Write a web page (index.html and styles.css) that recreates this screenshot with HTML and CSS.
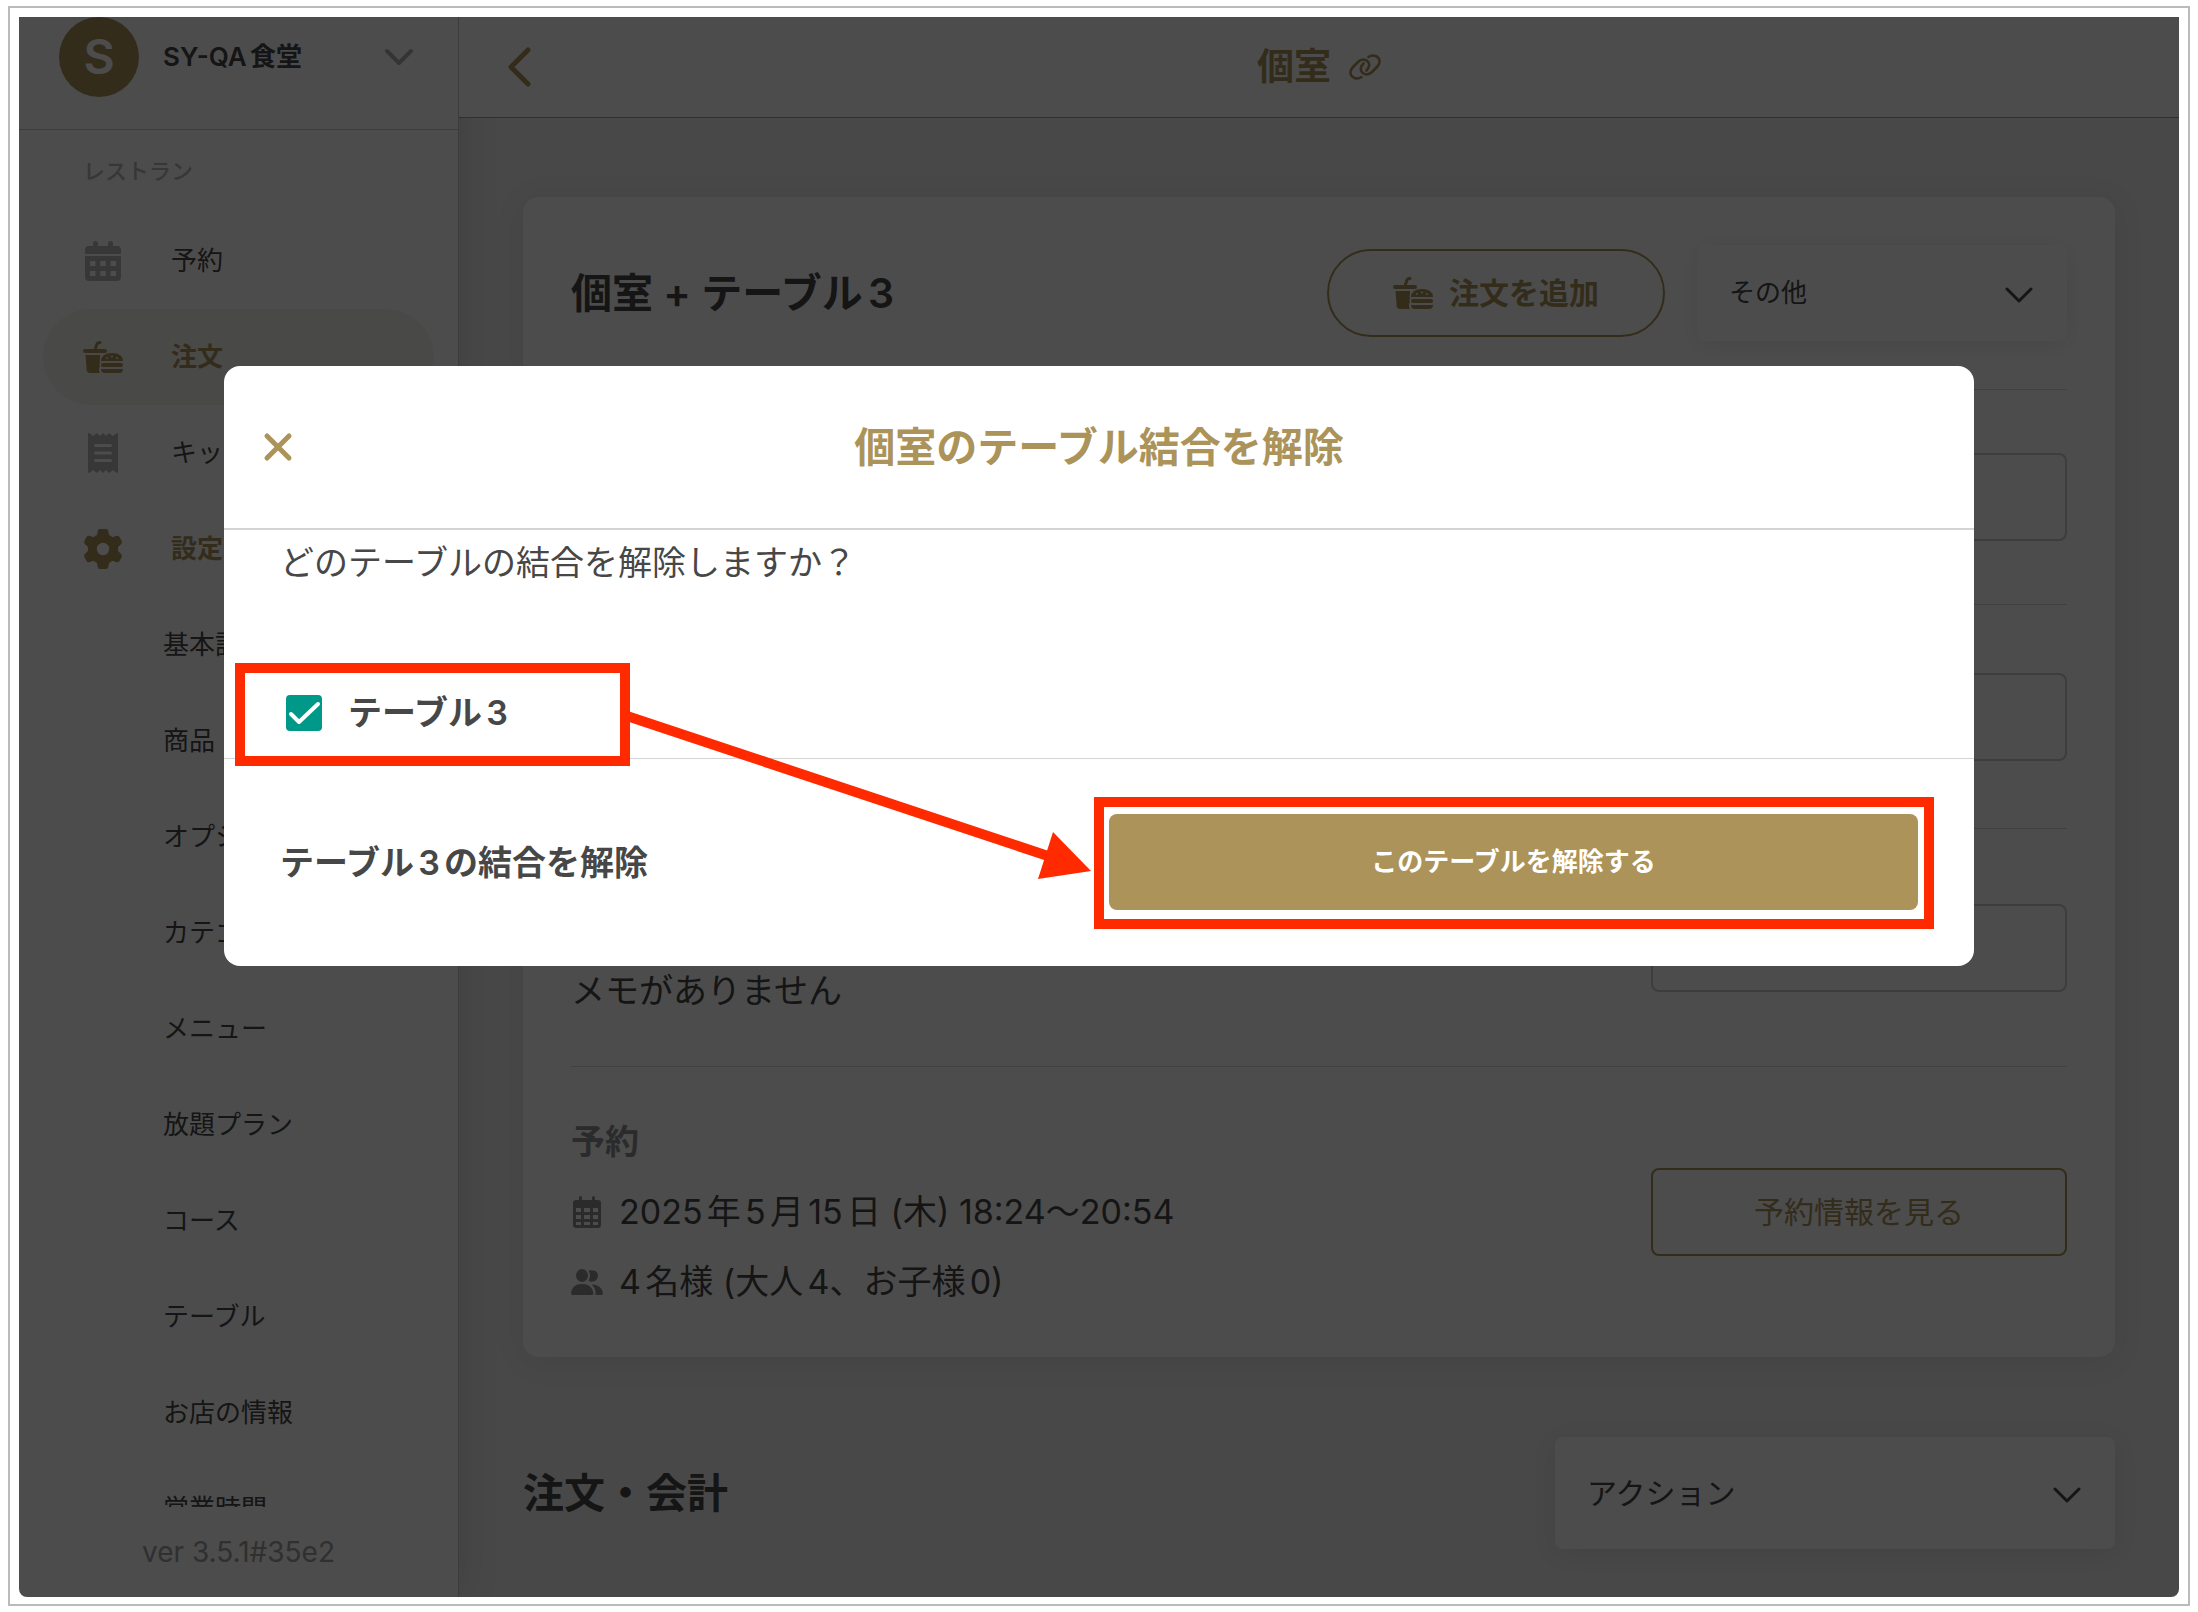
FILE: index.html
```html
<!DOCTYPE html>
<html lang="ja">
<head>
    <meta charset="UTF-8">
    <meta name="viewport" content="width=device-width, initial-scale=1.0">
    <title>個室</title>
    <link rel="stylesheet" href="styles.css">
</head>
<body>
    <!-- アイコン -->
    <svg class="sprite" aria-hidden="true">
        <symbol id="icon-food" viewBox="0 0 40 32">
            <path d="M12 9 14 3Q14.600 1.400 17 1.400" fill="none" stroke="currentColor" stroke-width="3" stroke-linecap="round"/>
            <rect x="0" y="8" width="24" height="4" rx="2"/>
            <path d="M2.500 14H17V17Q16 19 17 21.500 15.500 23 17 25 15.500 27 16 28.500 16 31 17 32H7Q4 32 3.700 29Z"/>
            <path fill-rule="evenodd" d="M18 20Q18.500 12 29 12 39.500 12 40 20ZM23 17a1 1 0 1 0 2 0 1 1 0 1 0-2 0ZM28 15.500a1 1 0 1 0 2 0 1 1 0 1 0-2 0ZM33 17a1 1 0 1 0 2 0 1 1 0 1 0-2 0Z"/>
            <rect x="18" y="22" width="22" height="4" rx="2"/>
            <path d="M18 28H40Q40 32 36 32H22Q18 32 18 28Z"/>
        </symbol>
        <symbol id="icon-calendar" viewBox="0 0 36 40">
            <rect x="8" y="0" width="5" height="9" rx="2.500"/>
            <rect x="23" y="0" width="5" height="9" rx="2.500"/>
            <path d="M4 5H32Q36 5 36 9V13H0V9Q0 5 4 5Z"/>
            <path fill-rule="evenodd" d="M0 15H36V36Q36 40 32 40H4Q0 40 0 36ZM5 20v5h5.500v-5ZM15.300 20v5h5.500v-5ZM25.500 20v5h5.500v-5ZM5 30v5h5.500v-5ZM15.300 30v5h5.500v-5ZM25.500 30v5h5.500v-5Z"/>
        </symbol>
        <symbol id="icon-calendar-grid" viewBox="0 0 28 32">
            <rect x="6" y="0" width="3" height="6" rx="1.500"/>
            <rect x="19" y="0" width="3" height="6" rx="1.500"/>
            <path fill-rule="evenodd" d="M3 4H25Q28 4 28 7V29Q28 32 25 32H3Q0 32 0 29V7Q0 4 3 4ZM3 12v4h5v-4ZM11 12v4h6v-4ZM20 12v4h5v-4ZM3 19v4h5v-4ZM11 19v4h6v-4ZM20 19v4h5v-4ZM3 26v3h5v-3ZM11 26v3h6v-3ZM20 26v3h5v-3Z"/>
        </symbol>
        <symbol id="icon-receipt" viewBox="0 0 30 40">
            <path fill-rule="evenodd" d="M0 1Q.500-.500 2 .500L5 3 9 0 12 3 15 0 18 3 21 0 25 3 28 .500Q29.500-.500 30 1V39Q29.500 40.500 28 39.500L25 37 21 40 18 37 15 40 12 37 9 40 5 37 2 39.500Q.500 40.500 0 39ZM7.500 11a1.300 1.300 0 0 0 0 3h15a1.300 1.300 0 0 0 0-3ZM7.500 18.500a1.300 1.300 0 0 0 0 3h15a1.300 1.300 0 0 0 0-3ZM7.500 26a1.300 1.300 0 0 0 0 3h15a1.300 1.300 0 0 0 0-3Z"/>
        </symbol>
        <symbol id="icon-gear" viewBox="0 0 38 40">
            <path fill-rule="evenodd" d="M16 0H22Q24 0 24.300 2L25 6Q27 7 28.500 8.200L32.500 6.800Q34.500 6.200 35.500 8L37.700 12Q38.500 14 37 15.300L34 18Q34.200 20 34 22L37 24.700Q38.500 26 37.700 28L35.500 32Q34.500 33.800 32.500 33.200L28.500 31.800Q27 33 25 34L24.300 38Q24 40 22 40H16Q14 40 13.700 38L13 34Q11 33 9.500 31.800L5.500 33.200Q3.500 33.800 2.500 32L.300 28Q-.500 26 1 24.700L4 22Q3.800 20 4 18L1 15.300Q-.500 14 .300 12L2.500 8Q3.500 6.200 5.500 6.800L9.500 8.200Q11 7 13 6L13.700 2Q14 0 16 0ZM12.800 20a6.200 6.200 0 1 0 12.400 0 6.200 6.200 0 1 0-12.400 0Z"/>
        </symbol>
        <symbol id="icon-people" viewBox="0 0 32 26">
            <ellipse cx="11" cy="6.500" rx="6" ry="6.500"/>
            <path d="M0 24Q1 15 11 15 21 15 22.500 24 22.500 26 21 26H1.500Q0 26 0 24Z"/>
            <path d="M17.500 1.500Q27 0 27 7 26.500 13 20 12.700 18.500 12.500 17.500 11.800 20.500 6.500 17.500 1.500Z"/>
            <path d="M20.500 15.500Q30.500 15.500 32 24 32 26 30.500 26H24.500Q25.500 20 20.500 15.500Z"/>
        </symbol>
        <symbol id="icon-link" viewBox="0 0 32 26">
            <g fill="none" stroke="currentColor" stroke-width="2.600" stroke-linecap="round">
                <path d="M12.500 23C8.500 26 1.500 24 1.500 18.500 1.500 15.500 3 14 9 8 13 4 18 5.500 19.500 8.500 21 11.500 20 14 17.500 16.500"/>
                <path d="M19.500 3C23.500 0 30.500 2 30.500 7.500 30.500 10.500 29 12 23 18 19 22 14 20.500 12.500 17.500 11 14.500 12 12 14.500 9.500"/>
            </g>
        </symbol>
        <symbol id="icon-down" viewBox="0 0 28 16">
            <path d="M2 2 14 14 26 2" fill="none" stroke="currentColor" stroke-width="3" stroke-linecap="round" stroke-linejoin="round"/>
        </symbol>
    </svg>

    <div class="frame">
        <div class="app">
            <aside class="sidebar">
                <div class="shop">
                    <span class="avatar">S</span>
                    <span class="shop-name">SY-QA食堂</span>
                    <svg class="shop-arrow" viewBox="0 0 28 16"><path d="M2 2 14 14 26 2" fill="none" stroke="currentColor" stroke-width="4" stroke-linecap="round" stroke-linejoin="round"/></svg>
                </div>
                <nav class="menu">
                    <p class="menu-label">レストラン</p>
                    <a href="#" class="menu-item"><svg><use href="#icon-calendar"/></svg>予約</a>
                    <a href="#" class="menu-item gold active"><svg><use href="#icon-food"/></svg>注文</a>
                    <a href="#" class="menu-item"><svg><use href="#icon-receipt"/></svg>キッチン</a>
                    <a href="#" class="menu-item gold"><svg><use href="#icon-gear"/></svg>設定</a>
                    <a href="#" class="menu-sub">基本設定</a>
                    <a href="#" class="menu-sub">商品</a>
                    <a href="#" class="menu-sub">オプション</a>
                    <a href="#" class="menu-sub">カテゴリー</a>
                    <a href="#" class="menu-sub">メニュー</a>
                    <a href="#" class="menu-sub">放題プラン</a>
                    <a href="#" class="menu-sub">コース</a>
                    <a href="#" class="menu-sub">テーブル</a>
                    <a href="#" class="menu-sub">お店の情報</a>
                    <a href="#" class="menu-sub">営業時間</a>
                </nav>
                <p class="version">ver 3.5.1#35e2</p>
            </aside>

            <main class="main">
                <header class="topbar">
                    <button class="back" aria-label="戻る">
                        <svg viewBox="0 0 24 40"><path d="M21 3 4 20 21 37" fill="none" stroke="currentColor" stroke-width="5" stroke-linecap="round" stroke-linejoin="round"/></svg>
                    </button>
                    <h1>個室</h1>
                    <svg class="link-icon"><use href="#icon-link"/></svg>
                </header>

                <div class="content">
                    <section class="card">
                        <div class="card-head">
                            <h2>個室 + テーブル3</h2>
                            <button class="add-order"><svg><use href="#icon-food"/></svg>注文を追加</button>
                            <div class="select other">
                                <select aria-label="その他"><option>その他</option></select>
                                <svg><use href="#icon-down"/></svg>
                            </div>
                        </div>
                        <div class="row row-first">
                            <button class="row-button" aria-label="編集"></button>
                        </div>
                        <div class="row row-second">
                            <button class="row-button" aria-label="編集"></button>
                        </div>
                        <div class="row row-memo">
                            <p class="memo">メモがありません</p>
                            <button class="row-button" aria-label="メモを編集"></button>
                        </div>
                        <div class="row row-reserve">
                            <div class="reserve">
                                <h3>予約</h3>
                                <p><svg><use href="#icon-calendar-grid"/></svg>2025年5月15日 (木) 18:24〜20:54</p>
                                <p><svg class="people"><use href="#icon-people"/></svg>4名様 (大人4、お子様0)</p>
                            </div>
                            <button class="row-button gold">予約情報を見る</button>
                        </div>
                    </section>

                    <section class="orders">
                        <h2>注文・会計</h2>
                        <div class="select action">
                            <select aria-label="アクション"><option>アクション</option></select>
                            <svg><use href="#icon-down"/></svg>
                        </div>
                    </section>
                </div>
            </main>

            <!-- テーブル結合解除モーダル -->
            <div class="overlay">
                <div class="modal" role="dialog" aria-labelledby="modal-title">
                    <div class="modal-head">
                        <button class="close" aria-label="閉じる">
                            <svg viewBox="0 0 28 28"><path d="M3 3 25 25M25 3 3 25" stroke="currentColor" stroke-width="5" stroke-linecap="round"/></svg>
                        </button>
                        <h2 id="modal-title">個室のテーブル結合を解除</h2>
                    </div>
                    <div class="modal-body">
                        <p>どのテーブルの結合を解除しますか？</p>
                        <label class="option">
                            <span class="check">
                                <input type="checkbox" checked>
                                <svg viewBox="0 0 36 36"><path d="M5 19 13 27 32 9" fill="none" stroke="#fff" stroke-width="4" stroke-linecap="round" stroke-linejoin="round"/></svg>
                            </span>
                            テーブル3
                        </label>
                    </div>
                    <div class="modal-foot">
                        <p>テーブル3の結合を解除</p>
                        <div class="submit-box">
                            <button class="submit">このテーブルを解除する</button>
                        </div>
                    </div>
                    <svg class="arrow" viewBox="0 0 470 170">
                        <path d="M4 9 425 149" stroke="#ff2a00" stroke-width="10"/>
                        <path d="M430 125 468 164 415 172Z" fill="#ff2a00"/>
                    </svg>
                </div>
            </div>
        </div>
    </div>
</body>
</html>
```

FILE: styles.css
```css
* { box-sizing: border-box; }
body { margin: 0; padding: 6px 8px; height: 100vh; background: #fff; color: #474747; font-family: Inter, "Noto Sans CJK JP", sans-serif; font-size: 26px; line-height: 36px; text-autospace: normal; }
h1, h2, h3, p { margin: 0; }
h1, h2, h3 { font-weight: 600; }
a { color: inherit; text-decoration: none; }
button, select { font: inherit; color: inherit; background: none; border: none; padding: 0; cursor: pointer; }
svg { display: block; fill: currentColor; flex-shrink: 0; overflow: visible; }
.sprite { position: absolute; width: 0; height: 0; }

.frame { height: 100%; border: 2px solid #bbb; padding: 9px 9px 7px; }
.app { position: relative; display: flex; height: 100%; overflow: hidden; border-radius: 0 0 8px 8px; background: #f0f0f0; }

/* サイドバー */
.sidebar { display: flex; flex-direction: column; width: 440px; flex-shrink: 0; background: #fff; border-right: 1px solid #c8c8c8; box-shadow: 0 0 40px rgba(0, 0, 0, 0.12); }
.shop { display: flex; align-items: center; padding: 0 45px 32px 40px; border-bottom: 1px solid #ccc; }
.avatar { width: 80px; height: 80px; border-radius: 50%; background: #ab9359; color: #fff; font-size: 48px; font-weight: 600; line-height: 80px; text-align: center; }
.shop-name { flex: 1; margin-left: 24px; font-weight: 600; }
.shop-arrow { width: 28px; height: 16px; color: #b0b0b0; }
.menu { flex: 1; min-height: 0; overflow: hidden; }
.menu-label { padding-left: 64px; line-height: 83px; font-size: 22px; font-weight: 500; color: #b8b8b8; }
.menu-item { display: flex; align-items: center; gap: 48px; height: 96px; margin: 0 24px; padding-left: 40px; border-radius: 48px; }
.menu-item svg { width: 40px; height: 40px; color: #b8b8b8; }
.gold, .menu-item.gold svg { color: #ab9359; }
.menu-item.gold { font-weight: 600; }
.menu-item.active { background: #f6f4ee; }
.menu-sub { display: block; padding-left: 144px; line-height: 96px; }
.version { line-height: 90px; text-align: center; font-size: 28px; color: #a0a0a0; }

/* メイン */
.main { flex: 1; min-width: 0; }
.topbar { position: relative; display: flex; align-items: center; justify-content: center; gap: 18px; height: 101px; background: #fff; border-bottom: 1px solid #a0a0a0; color: #ab9359; }
.topbar h1 { font-size: 37px; line-height: 48px; }
.back { position: absolute; left: 48px; color: #ab9359; }
.back svg { width: 24px; height: 40px; }
.link-icon { width: 32px; height: 26px; }
.content { padding: 79px 64px 0; }
.card { padding: 0 48px; background: #fff; border-radius: 16px; box-shadow: 0 4px 32px rgba(0, 0, 0, 0.08); }
.card-head { display: flex; align-items: center; height: 193px; border-bottom: 1px solid #d8d8d8; }
.card-head h2, .orders h2 { flex: 1; font-size: 41px; line-height: 56px; }
.add-order { display: flex; align-items: center; justify-content: center; gap: 16px; width: 338px; height: 88px; border: 2px solid #ab9359; border-radius: 44px; color: #ab9359; font-size: 30px; font-weight: 600; }
.add-order svg { width: 40px; height: 32px; }
.select { position: relative; background: #fff; border-radius: 8px; box-shadow: 0 4px 24px rgba(0, 0, 0, 0.08); }
.select select { appearance: none; width: 100%; height: 100%; padding: 0 32px; }
.select svg { position: absolute; right: 34px; top: 50%; width: 28px; height: 16px; margin-top: -6px; pointer-events: none; }
.other { width: 370px; height: 96px; margin-left: 32px; }
.row { display: flex; align-items: center; justify-content: flex-end; border-bottom: 1px solid #d8d8d8; }
.row-first { padding: 63px 0; }
.row-second { padding: 68px 0 67px; }
.row-memo { padding: 75px 0 74px; }
.row-reserve { padding: 40px 0; border-bottom: none; }
.row-button { width: 416px; height: 88px; border: 2px solid #ccc; border-radius: 8px; font-size: 30px; }
.row-button.gold { border-color: #ab9359; }
.memo { flex: 1; align-self: flex-end; font-size: 34px; line-height: 70px; margin-bottom: -34px; }
.reserve { flex: 1; font-size: 34px; line-height: 70px; }
.reserve h3 { font-size: 34px; color: #909090; }
.reserve p { display: flex; align-items: center; gap: 16px; }
.reserve svg { width: 32px; height: 32px; color: #909090; }
.reserve .people { height: 26px; }
.orders { display: flex; align-items: center; margin-top: 80px; }
.action { width: 560px; height: 112px; font-size: 30px; }

/* モーダル */
.overlay { position: absolute; inset: 0; padding: 349px 205px 0; background: rgba(0, 0, 0, 0.7); }
.modal { position: relative; height: 600px; background: #fff; border-radius: 16px; font-size: 34px; }
.modal-head { position: relative; display: flex; align-items: center; justify-content: center; height: 164px; border-bottom: 2px solid #d4d4d4; color: #ab9359; }
.modal-head h2 { font-size: 41px; line-height: 56px; }
.close { position: absolute; left: 40px; color: #ab9359; }
.close svg { width: 28px; height: 28px; }
.modal-body { height: 229px; border-bottom: 1px solid #d4d4d4; }
.modal-body p { padding: 8px 56px 0; line-height: 50px; }
.option { position: relative; display: flex; align-items: center; gap: 26px; width: 395px; height: 103px; margin: 75px 0 0 11px; padding: 0 0 4px 41px; border: 10px solid #ff2a00; font-weight: 600; }
.check { position: relative; width: 36px; height: 36px; }
.check input { appearance: none; display: block; width: 36px; height: 36px; margin: 0; border-radius: 4px; background: #009888; }
.check svg { position: absolute; inset: 0; }
.modal-foot { display: flex; align-items: center; justify-content: space-between; height: 207px; padding: 0 40px 0 56px; font-weight: 600; }
.submit-box { padding: 7px 6px 9px 5px; border: 10px solid #ff2a00; }
.submit { display: block; width: 809px; height: 96px; border-radius: 8px; background: #ab9359; color: #fff; font-size: 26px; font-weight: 600; }
.arrow { position: absolute; left: 399px; top: 341px; width: 470px; height: 170px; }
```
